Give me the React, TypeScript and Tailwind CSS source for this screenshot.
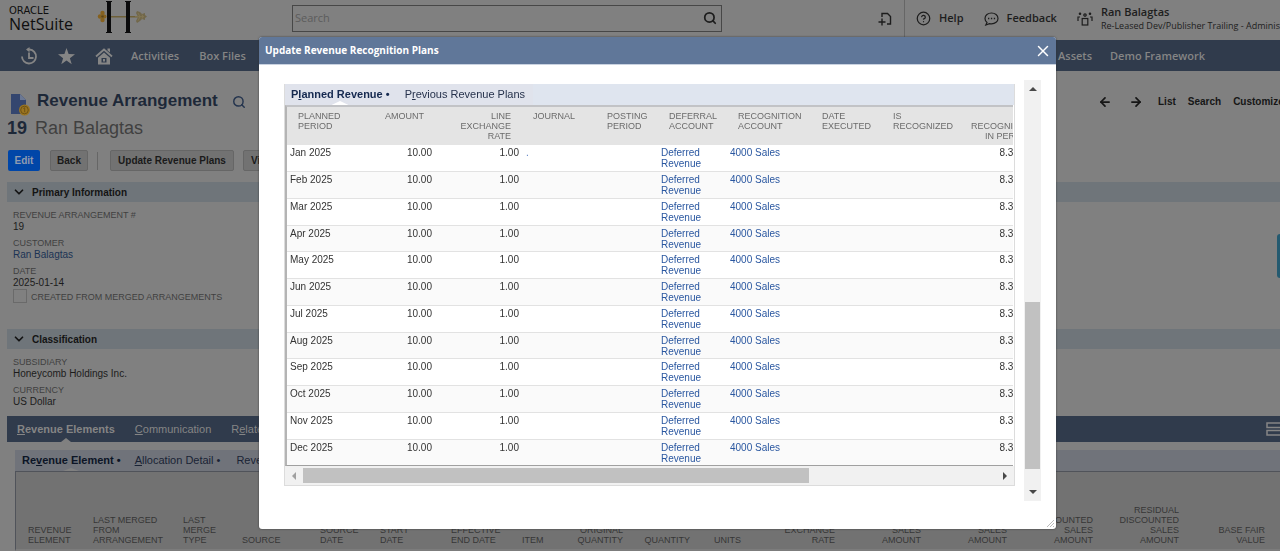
import type { ReactNode } from 'react';
import { ArrowLeft, ArrowRight, ChevronDown, CircleHelp, Search, X } from 'lucide-react';

type Column = {
  lines: string[]
  width: string
  right?: boolean
}

const PERIODS = ['Jan', 'Feb', 'Mar', 'Apr', 'May', 'Jun', 'Jul', 'Aug', 'Sep', 'Oct', 'Nov', 'Dec'];

const PLAN_COLUMNS: Column[] = [
  { lines: ['PLANNED', 'PERIOD'], width: 'w-[78px]' },
  { lines: ['AMOUNT'], width: 'w-[70px]', right: true },
  { lines: ['LINE', 'EXCHANGE', 'RATE'], width: 'w-[87px]', right: true },
  { lines: ['JOURNAL'], width: 'w-[74px]' },
  { lines: ['POSTING', 'PERIOD'], width: 'w-[62px]' },
  { lines: ['DEFERRAL', 'ACCOUNT'], width: 'w-[69px]' },
  { lines: ['RECOGNITION', 'ACCOUNT'], width: 'w-[84px]' },
  { lines: ['DATE', 'EXECUTED'], width: 'w-[71px]' },
  { lines: ['IS', 'RECOGNIZED'], width: 'w-[71px]' },
  { lines: ['%', 'RECOGNIZED', 'IN PERIOD'], width: 'w-[89px]', right: true },
];

const ELEMENT_COLUMNS: Column[] = [
  { lines: ['REVENUE', 'ELEMENT'], width: 'w-[65px]' },
  { lines: ['LAST MERGED', 'FROM', 'ARRANGEMENT'], width: 'w-[90px]' },
  { lines: ['LAST', 'MERGE', 'TYPE'], width: 'w-[59px]' },
  { lines: ['SOURCE'], width: 'w-[78px]' },
  { lines: ['SOURCE', 'DATE'], width: 'w-[60px]' },
  { lines: ['START', 'DATE'], width: 'w-[71px]' },
  { lines: ['EFFECTIVE', 'END DATE'], width: 'w-[71px]' },
  { lines: ['ITEM'], width: 'w-[57px]' },
  { lines: ['ORIGINAL', 'QUANTITY'], width: 'w-[68px]', right: true },
  { lines: ['QUANTITY'], width: 'w-[67px]', right: true },
  { lines: ['UNITS'], width: 'w-[61px]' },
  { lines: ['EXCHANGE', 'RATE'], width: 'w-[84px]', right: true },
  { lines: ['SALES', 'AMOUNT'], width: 'w-[86px]', right: true },
  { lines: ['SALES', 'AMOUNT'], width: 'w-[86px]', right: true },
  { lines: ['DISCOUNTED', 'SALES', 'AMOUNT'], width: 'w-[86px]', right: true },
  { lines: ['RESIDUAL', 'DISCOUNTED', 'SALES', 'AMOUNT'], width: 'w-[86px]', right: true },
  { lines: ['BASE FAIR', 'VALUE'], width: 'w-[86px]', right: true },
];

function CompanyLogo() {
  return (
    <svg width="52" height="34" viewBox="0 0 52 34" className="ml-[25px]" aria-label="Honeycomb Holdings">
      <rect x="11" y="15" width="30" height="1.500" fill="#6e6038" />
      <g fill="#0b0b0c">
        <rect x="10" y="1" width="4" height="30" />
        <rect x="29" y="1" width="4" height="30" />
        <rect x="9" y="0" width="6" height="1" />
        <rect x="9" y="31" width="6" height="1" />
        <rect x="28" y="0" width="6" height="1" />
        <rect x="28" y="31" width="6" height="1" />
      </g>
      <g fill="#85611f">
        <circle cx="5.500" cy="12" r="2.200" />
        <circle cx="5.500" cy="19" r="2.200" />
        <circle cx="3" cy="15.500" r="2.200" />
        <circle cx="7.500" cy="15.500" r="2" />
      </g>
      <circle cx="5.500" cy="15.500" r="1.200" fill="#5d4414" />
      <path d="M39 12l1-2 3 1 2 2 3-1 0 2 2 1.500-2 1.500 0 2-3-1-2 2-3 2-1-2 2-4z" fill="#71674a" />
      <path d="M38 15.700h9M41 12l2 3.700-2 4M45 13.500l1 2.200-1 2.200" fill="none" stroke="#857955" strokeWidth="0.800" />
    </svg>
  );
}

function HistoryIcon() {
  return (
    <svg width="18" height="18" viewBox="0 0 18 18" fill="none" stroke="#858585" strokeWidth="1.800">
      <path d="M2 9.500a7 7 0 1 0 7.500-7H7.500" />
      <path d="M9.500 0L6 2.600l3.500 2.600z" fill="#858585" stroke="none" />
      <path d="M9 5.500V11h4.500" />
    </svg>
  );
}

function StarIcon() {
  return (
    <svg width="17" height="17" viewBox="0 0 24 24" fill="#858585">
      <path d="M12 0l3 8.600 9 .2-7.200 5.500L19.400 23 12 17.800 4.600 23l2.600-8.700L0 8.800l9-.2z" />
    </svg>
  );
}

function HomeIcon() {
  return (
    <svg width="18" height="17" viewBox="0 0 18 17">
      <path d="M1 8.500L9 1.500l8 7" fill="none" stroke="#858585" strokeWidth="1.800" />
      <path d="M12.500 0.500h2.500v4l-2.500-2z" fill="#858585" />
      <path fillRule="evenodd" d="M9 4.500l6 5.200V16.500H3V9.700zM6.500 10v4.500h5V10z" fill="#858585" />
      <rect x="8" y="11" width="2" height="2.500" fill="#858585" />
    </svg>
  );
}

function NewDocIcon() {
  return (
    <svg width="14" height="14" viewBox="0 0 14 14" fill="none" stroke="#1d1d1d" strokeWidth="1.400">
      <path d="M4 5V1.500h5.500L12.500 4.500V12H9" />
      <path d="M4 6.500v7M0.500 10h7" />
    </svg>
  );
}

function ChatIcon() {
  return (
    <svg width="15" height="14" viewBox="0 0 15 14" fill="none" stroke="#1d1d1d" strokeWidth="1.200">
      <path d="M7.500 1C3.900 1 1 3.400 1 6.400c0 1.600.8 3 2 4L1.800 13l3.700-1.300c.6.100 1.300.2 2 .2 3.600 0 6.500-2.400 6.500-5.500S11.100 1 7.500 1z" />
      <path d="M4 6.500h1.300M6.900 6.500h1.300M9.800 6.500h1.300" strokeWidth="1.500" />
    </svg>
  );
}

function RolesIcon() {
  return (
    <svg width="16" height="15" viewBox="0 0 16 15" fill="none" stroke="#1d1d1d" strokeWidth="1.200">
      <circle cx="8" cy="4" r="1.200" />
      <rect x="5.200" y="7.500" width="5.600" height="6.500" />
      <path d="M1 10V6h2M15 10V6h-2" />
      <circle cx="3" cy="2.800" r="0.700" />
      <circle cx="13" cy="2.800" r="0.700" />
    </svg>
  );
}

function RecordIcon() {
  return (
    <svg width="21" height="22" viewBox="0 0 21 22">
      <path d="M1 0h9l6 6v14H1z" fill="#34466f" />
      <path d="M10 0l6 6h-6z" fill="#6b7894" />
      <circle cx="14.500" cy="16" r="5.500" fill="#9a7420" />
      <circle cx="14.500" cy="16" r="3.800" fill="none" stroke="#6d5216" />
      <path d="M13.300 14.500l1.400-.8v4.500" fill="none" stroke="#6d5216" />
    </svg>
  );
}

function Header() {
  return (
    <header className="flex h-10 items-center overflow-hidden font-['Open_Sans',sans-serif] text-[11px] text-[#1d1d1d]">
      <div className="flex w-[292px] shrink-0 items-center pb-1 pl-[9px]">
        <div className="w-[63px] text-[#0f0f0f]">
          <div className="font-['DejaVu_Sans',sans-serif] text-[10px] leading-[12px]">ORACLE</div>
          <div className="text-[16px] leading-[14px]">NetSuite</div>
        </div>
        <CompanyLogo />
      </div>
      <form className="mb-1 flex h-[27px] w-[430px] shrink-0 items-center border border-[#474747] pl-[2px] pr-1">
        <input
          aria-label="Search"
          placeholder="Search"
          className="min-w-0 flex-1 bg-transparent text-[11px] outline-none placeholder:text-[#5c5c5c]"
        />
        <button type="button" aria-label="Run search">
          <Search className="size-[14px]" strokeWidth={3} />
        </button>
      </form>
      <div className="flex h-full min-w-0 flex-1 items-center pb-[3px] font-semibold">
        <button aria-label="New" className="ml-[156px] shrink-0"><NewDocIcon /></button>
        <span className="ml-3 h-full w-px shrink-0 bg-[#666]" />
        <button className="ml-[11px] flex shrink-0 items-center gap-2">
          <CircleHelp className="size-[15px]" /> Help
        </button>
        <button className="ml-5 flex shrink-0 items-center gap-2">
          <ChatIcon /> Feedback
        </button>
        <button className="ml-5 flex shrink-0 items-center gap-2 whitespace-nowrap text-left">
          <RolesIcon />
          <span>
            <span className="block leading-[14px]">Ran Balagtas</span>
            <span className="block text-[9px] font-medium leading-[13px]">Re-Leased Dev/Publisher Trailing - Administrator</span>
          </span>
        </button>
      </div>
    </header>
  );
}

function NavBar() {
  return (
    <nav className="flex h-[31px] items-center overflow-hidden whitespace-nowrap bg-[#303b4c] pt-px font-['Open_Sans',sans-serif] text-[11px] font-semibold text-[#858585]">
      <div className="flex w-[1058px] shrink-0 items-center pl-5">
        <a href="#recent" aria-label="Recent records"><HistoryIcon /></a>
        <a href="#shortcuts" aria-label="Shortcuts" className="ml-5"><StarIcon /></a>
        <a href="#home" aria-label="Home" className="ml-5"><HomeIcon /></a>
        <a href="#activities" className="ml-[18px]">Activities</a>
        <a href="#box" className="ml-5">Box Files</a>
      </div>
      <a href="#assets">Assets</a>
      <a href="#demo" className="ml-[18px]">Demo Framework</a>
    </nav>
  );
}

function SectionBar({ title }: { title: string }) {
  return (
    <h2 className="flex h-5 items-center gap-[6px] bg-[#6f757a] pl-[5px] text-[10px] font-bold text-[#141414]">
      <ChevronDown className="size-[14px]" strokeWidth={3} />
      {title}
    </h2>
  );
}

function Field({ label, children }: { label: string; children: ReactNode }) {
  return (
    <div className="mb-[6px] text-[10px] leading-[11px] text-[#1c1c1c]">
      <dt className="text-[9px] text-[#404040]">{label}</dt>
      <dd>{children}</dd>
    </div>
  );
}

function ElementsTabs() {
  return (
    <section className="mt-[9px] pl-[7px] text-[11px]">
      <div className="flex h-[26px] items-center whitespace-nowrap bg-[#303b4c] pl-[10px] text-[#858585]">
        <a href="#elements" className="relative flex h-full items-center font-bold">
          <span><u>R</u>evenue Elements</span>
          <svg width="10" height="4" viewBox="0 0 10 4" className="absolute bottom-0 left-1/2 -translate-x-1/2">
            <path d="M0 4l5-4 5 4z" fill="#808080" />
          </svg>
        </a>
        <a href="#communication" className="ml-5"><u>C</u>ommunication</a>
        <a href="#related" className="ml-5">R<u>e</u>lated Records</a>
        <svg width="14" height="14" viewBox="0 0 14 14" className="ml-auto" fill="none" stroke="#858585" strokeWidth="1.500">
          <rect x="1" y="1" width="15" height="4.500" />
          <rect x="1" y="8.500" width="15" height="4.500" />
        </svg>
      </div>
      <div className="mt-2 ml-2 flex h-[21px] items-center whitespace-nowrap bg-[#70737a] pl-[7px] text-[#1a2335]">
        <a href="#element" className="relative flex h-full items-center font-bold text-[#0c1526]">
          <span>Re<u>v</u>enue Element •</span>
          <svg width="16" height="3" viewBox="0 0 16 3" className="absolute bottom-0 left-1/2 -translate-x-1/2">
            <path d="M0 3l8-3 8 3z" fill="#808080" />
          </svg>
        </a>
        <a href="#allocation" className="ml-[14px]"><u>A</u>llocation Detail •</a>
        <a href="#plans" className="ml-4">Revenue Plans</a>
      </div>
      <div className="ml-2 overflow-hidden border-b-2 border-l border-t border-b-[#7c7c7c] border-l-[#50535a] border-t-[#50535a] bg-[#727272]">
        <table className="w-[1261px] table-fixed text-[9px] leading-[10px] text-[#363636]">
          <thead>
            <tr className="h-[77px]">
              {ELEMENT_COLUMNS.map((col, i) => (
                <th
                  key={i}
                  className={`${col.width} whitespace-nowrap pb-1 align-bottom font-normal ${col.right ? 'pr-3 text-right' : 'pl-3 text-left'}`}
                >
                  {col.lines.map(line => (
                    <div key={line} className={col.right ? 'flex justify-end' : ''}>{line}</div>
                  ))}
                </th>
              ))}
            </tr>
          </thead>
        </table>
      </div>
    </section>
  );
}

function RecordPage() {
  return (
    <main>
      <div className="flex h-[45px] items-end pl-[10px]">
        <RecordIcon />
        <h1 className="ml-[6px] pb-[5px] text-[17px] font-bold leading-[20px] text-[#1d2838]">Revenue Arrangement</h1>
        <Search className="mb-[7px] ml-[14px] size-[14px] text-[#24344e]" strokeWidth={2.5} />
        <div className="ml-auto flex w-[182px] shrink-0 items-center overflow-hidden whitespace-nowrap pb-[7px] text-[10px] font-bold text-[#161616]">
          <ArrowLeft className="size-[14px] shrink-0" strokeWidth={3} />
          <ArrowRight className="ml-[17px] size-[14px] shrink-0" strokeWidth={3} />
          <a href="#list" className="ml-[15px]">List</a>
          <a href="#search" className="ml-3">Search</a>
          <a href="#customize" className="ml-3">Customize</a>
        </div>
      </div>
      <div className="pl-[7px] text-[18px] leading-[24px] text-[#404040]">
        <b className="mr-2 text-[#1d2838]">19</b>Ran Balagtas
      </div>
      <div className="mt-[10px] flex h-[21px] items-center whitespace-nowrap pl-[8px] text-[10px] font-bold text-[#1a1a1a]">
        <button className="h-full w-[32px] rounded-[2px] bg-[#0046a8] text-[#8f9bb0]">Edit</button>
        <button className="ml-[10px] h-full w-[38px] rounded-[2px] border border-[#666] bg-[#727272]">Back</button>
        <span className="ml-[9px] mr-3 h-[18px] w-px bg-[#666]" />
        <button className="h-full w-[124px] rounded-[2px] border border-[#666] bg-[#727272]">Update Revenue Plans</button>
        <button className="ml-[9px] h-full rounded-[2px] border border-[#666] bg-[#727272] px-[7px]">View</button>
      </div>
      <div className="mt-[11px] pl-[7px]">
        <SectionBar title="Primary Information" />
        <dl className="h-[127px] px-[6px] pt-2">
          <Field label="REVENUE ARRANGEMENT #">19</Field>
          <Field label="CUSTOMER"><a href="#customer" className="text-[#1b3354]">Ran Balagtas</a></Field>
          <Field label="DATE">2025-01-14</Field>
          <label className="-mt-[5px] flex items-end gap-1 text-[9px] leading-[11px] text-[#404040]">
            <input type="checkbox" disabled className="size-[14px] appearance-none border border-[#6a6a6a]" />
            CREATED FROM MERGED ARRANGEMENTS
          </label>
        </dl>
        <SectionBar title="Classification" />
        <dl className="px-[6px] pt-2">
          <Field label="SUBSIDIARY">Honeycomb Holdings Inc.</Field>
          <Field label="CURRENCY">US Dollar</Field>
        </dl>
      </div>
      <ElementsTabs />
    </main>
  );
}

function PlanTable() {
  return (
    <div className="mr-px overflow-hidden border-b border-l-2 border-t-2 border-b-[#a0a0a0] border-l-[#b4b4b4] border-t-[#c2c3c6]">
      <table className="w-[755px] table-fixed text-[10px] leading-[11px] text-[#333]">
        <thead>
          <tr className="h-[38px] bg-[#e4e4e4] text-[9px] leading-[10px] text-[#6b6b6b]">
            {PLAN_COLUMNS.map((col, i) => (
              <th
                key={i}
                className={`${col.width} whitespace-nowrap px-[11px] pt-1 align-top font-normal ${col.right ? 'text-right' : 'text-left'}`}
              >
                {col.lines.map(line => <div key={line}>{line}</div>)}
              </th>
            ))}
          </tr>
        </thead>
        <tbody>
          {PERIODS.map((month, i) => (
            <tr
              key={month}
              className="h-[27px] border-t border-[#e2e2e2] first:h-[26px] first:border-t-0 even:bg-[#fafafa] nth-[4n]:h-[26px] *:px-[3px] *:pt-[2px] *:align-top"
            >
              <td>{month} 2025</td>
              <td className="text-right">10.00</td>
              <td className="text-right">1.00</td>
              <td className="text-[#5b7fc4]">{i === 0 && <a href="#journal" className="pl-px">.</a>}</td>
              <td />
              <td><a href="#deferred" className="text-[#2a57a0]">Deferred<br />Revenue</a></td>
              <td><a href="#sales" className="text-[#2a57a0]">4000 Sales</a></td>
              <td />
              <td />
              <td className="text-right">8.3333%</td>
            </tr>
          ))}
        </tbody>
      </table>
    </div>
  );
}

function PlansDialog() {
  return (
    <div
      role="dialog"
      aria-label="Update Revenue Recognition Plans"
      className="relative mb-auto ml-[259px] mr-[224px] mt-[37px] min-w-0 flex-1 rounded-[3px] bg-white shadow-[0_0_2px_#333]"
    >
      <div className="flex h-[27px] items-center justify-between rounded-t-[3px] bg-[#607799] pl-[6px] pr-1 font-['Open_Sans',sans-serif] text-[10px] font-bold text-white">
        <h2>Update Revenue Recognition Plans</h2>
        <button aria-label="Close"><X className="size-[18px]" strokeWidth={2} /></button>
      </div>
      <div className="flex gap-[9px] border-t border-[#c9d2e0] pb-7 pl-[25px] pr-[15px] pt-[15px]">
        <div className="mb-[15px] mt-1 min-w-0 flex-1 border-x border-b border-[#dcdcdc]">
          <div className="flex h-[21px] bg-[#dfe5ef] text-[11px] text-[#26324c]">
            <div className="flex items-center gap-[15px] bg-[#e0e3ec] pl-[6px] pr-2">
              <a href="#planned" className="relative flex h-full items-center font-bold text-[#15294f]">
                <span>P<u>l</u>anned Revenue •</span>
                <svg width="17" height="4" viewBox="0 0 17 4" className="absolute bottom-0 left-1/2 -translate-x-1/2">
                  <path d="M0 4l8.500-4L17 4z" fill="#fff" />
                </svg>
              </a>
              <a href="#previous">P<u>r</u>evious Revenue Plans</a>
            </div>
          </div>
          <PlanTable />
          <div className="flex h-[19px] items-center bg-[#f1f1f1] py-[2px]">
            <svg width="18" height="8" viewBox="0 0 18 8"><path d="M11 0v8L7 4z" fill="#a0a0a0" /></svg>
            <div className="flex h-full flex-1"><span className="h-full w-[73%] bg-[#c1c1c1]" /></div>
            <svg width="18" height="8" viewBox="0 0 18 8"><path d="M7 0v8l4-4z" fill="#484848" /></svg>
          </div>
        </div>
        <div className="flex w-[17px] flex-col items-center bg-[#f1f1f1]">
          <svg width="8" height="18" viewBox="0 0 8 18"><path d="M0 11h8L4 7z" fill="#484848" /></svg>
          <div className="flex w-[15px] flex-1 flex-col">
            <span className="flex-[204]" />
            <span className="flex-[167] bg-[#c1c1c1]" />
            <span className="flex-[14]" />
          </div>
          <svg width="8" height="18" viewBox="0 0 8 18"><path d="M0 7h8l-4 4z" fill="#484848" /></svg>
        </div>
      </div>
      <svg width="7" height="7" viewBox="0 0 7 7" className="absolute bottom-[2px] right-[2px]" stroke="#bbb">
        <path d="M0 7l7-7M3 7l4-4M6 7l1-1" />
      </svg>
    </div>
  );
}

export default function App() {
  return (
    <div className="relative h-screen overflow-hidden bg-[#808080] font-['Liberation_Sans',Arial,sans-serif]">
      <Header />
      <NavBar />
      <RecordPage />
      <button aria-label="Open help panel" className="fixed right-0 top-[234px] h-11 w-[3px] rounded-l-[3px] bg-[#245a70]" />
      <div className="fixed inset-0 flex">
        <PlansDialog />
      </div>
    </div>
  );
}
